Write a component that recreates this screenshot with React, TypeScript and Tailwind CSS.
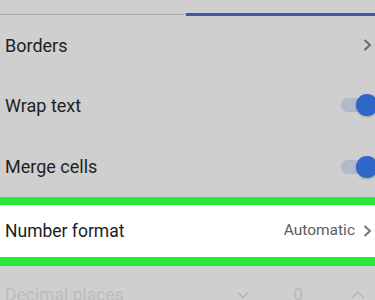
const font = { fontFamily: "Roboto, 'Noto Sans', sans-serif" };

function Chevron({ className }: { className?: string }) {
  return (
    <svg width="10" height="14" viewBox="0 0 10 14" className={className}>
      <path d="M2.5 2 L8 7 L2.5 12" fill="none" stroke="currentColor" strokeWidth="2" />
    </svg>
  );
}

function Toggle() {
  return (
    <div className="relative -mr-[3px] h-[22px] w-[37px]">
      <div className="absolute left-0 top-[4px] h-[14px] w-[37px] rounded-full bg-[#b2b9ca]" />
      <div className="absolute right-0 top-0 h-[22px] w-[22px] rounded-full bg-[#2f66c9] shadow-[0_1px_2px_rgba(0,0,0,0.25)]" />
    </div>
  );
}

export default function App() {
  return (
    <div className="h-[300px] w-[375px] overflow-hidden bg-[#cfcfcf]" style={font}>
      <div className="flex h-[16px] items-end">
        <div className="mb-px h-px w-[186px] bg-[#a9a9a9]" />
        <div className="h-[3px] flex-1 bg-[#3d5e9e]" />
      </div>

      <div className="flex h-[58px] items-center justify-between pl-[5px] pr-[3px]">
        <span className="text-[18px] text-[#1f1f1f]">Borders</span>
        <Chevron className="text-[#6b6b6b]" />
      </div>

      <div className="flex h-[62px] items-center justify-between pl-[5px]">
        <span className="text-[18px] text-[#1f1f1f]">Wrap text</span>
        <Toggle />
      </div>

      <div className="flex h-[61px] items-center justify-between pl-[5px]">
        <span className="text-[18px] text-[#1f1f1f]">Merge cells</span>
        <Toggle />
      </div>

      <div className="h-[8px] bg-[#27e93a]" />
      <div className="flex h-[52px] items-center justify-between bg-white pl-[5px] pr-[3px]">
        <span className="text-[17.5px] text-[#1c1c1c]">Number format</span>
        <div className="flex items-center gap-[7px]">
          <span className="text-[15.5px] text-[#5c5c5c]">Automatic</span>
          <Chevron className="text-[#777]" />
        </div>
      </div>
      <div className="h-[9px] bg-[#27e93a]" />

      <div className="flex h-[58px] items-center pl-[5px]">
        <span className="flex-1 text-[17.5px] text-[#bcbcbc]">Decimal places</span>
        <svg width="12" height="8" viewBox="0 0 12 8" className="text-[#b4b4b4]">
          <path d="M1 1.5 L6 6.5 L11 1.5" fill="none" stroke="currentColor" strokeWidth="1.5" />
        </svg>
        <span className="ml-[44px] text-[17px] text-[#b8b8b8]">0</span>
        <svg width="14" height="8" viewBox="0 0 14 8" className="ml-[48px] mr-[10px] text-[#b4b4b4]">
          <path d="M1 6.5 L7 1.5 L13 6.5" fill="none" stroke="currentColor" strokeWidth="1.5" />
        </svg>
      </div>
    </div>
  );
}
